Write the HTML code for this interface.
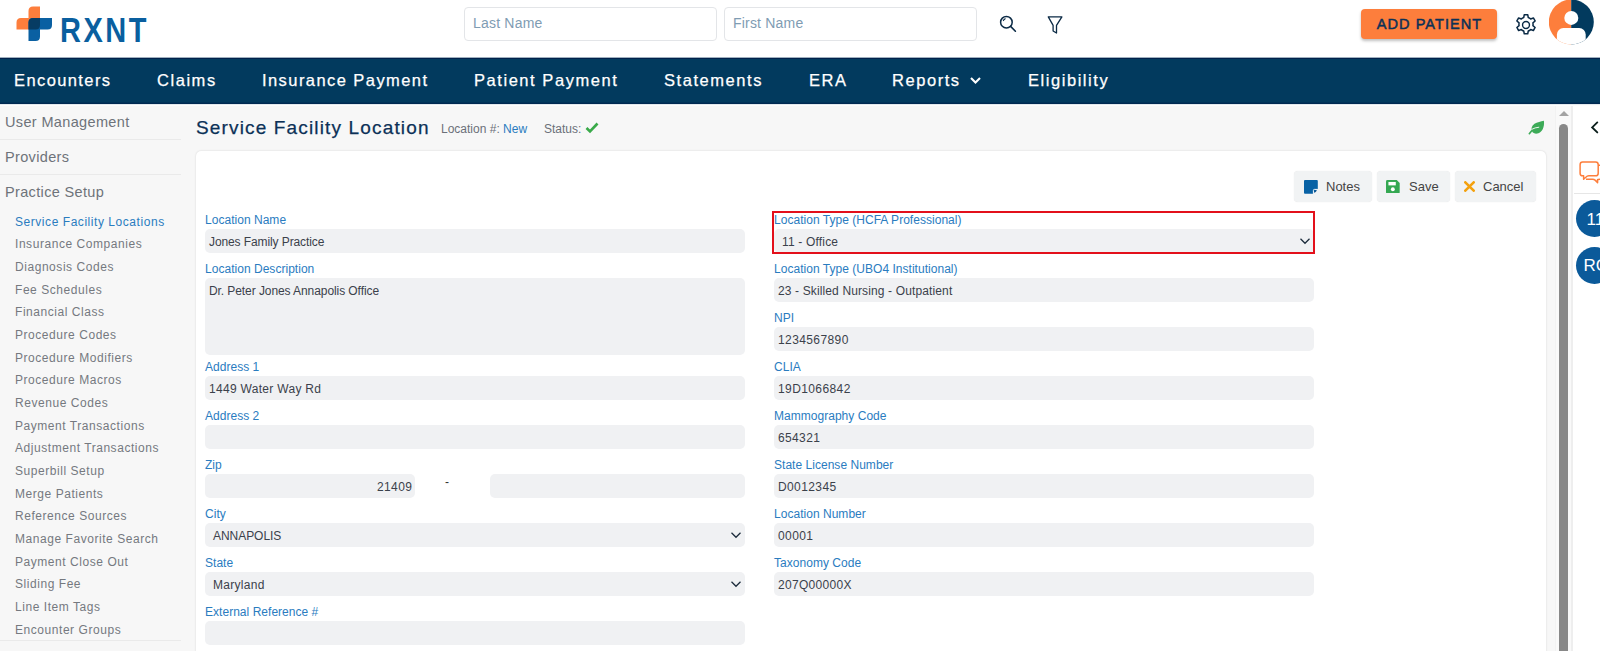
<!DOCTYPE html>
<html><head><meta charset="utf-8">
<style>
*{box-sizing:border-box;margin:0;padding:0}
html,body{width:1600px;height:651px;overflow:hidden;background:#f7f7f7;font-family:"Liberation Sans",sans-serif}
.abs{position:absolute}
#hdr{position:absolute;left:0;top:0;width:1600px;height:57px;background:#fff}
#nav{position:absolute;left:0;top:57px;width:1600px;height:47px;background:linear-gradient(#9fb1bf 0,#9fb1bf 1px,#02204b 1px,#02204b 2px,#023a5e 2px,#023a5e 45px,#012a52 46px,#012a52 47px)}
.nv{position:absolute;top:14.4px;color:#fff;-webkit-text-stroke:0.25px #fff;font-size:16.5px;letter-spacing:1.55px;white-space:nowrap;line-height:18px}
.inp{position:absolute;top:7px;height:34px;border:1px solid #e3e5e8;border-radius:4px;background:#fff;color:#7f9cb3;font-size:14px;padding-left:8px;line-height:30px;letter-spacing:0.2px}
#side{position:absolute;left:0;top:104px;width:181px;height:547px;background:#f7f7f7}
.sh{position:absolute;left:5px;font-size:14.5px;color:#6e737a;letter-spacing:0.35px;white-space:nowrap;line-height:18px}
.sep{position:absolute;left:0;width:181px;height:1px;background:#eaeaea}
.si{position:absolute;left:15px;font-size:12px;color:#75797f;letter-spacing:0.55px;white-space:nowrap;line-height:14px}
#card{position:absolute;left:196px;top:151px;width:1350px;height:520px;background:#fff;border-radius:5px;box-shadow:0 0 2px rgba(0,0,0,0.16)}
.lbl{position:absolute;font-size:12px;color:#2a7cbf;letter-spacing:0.03px;white-space:nowrap;line-height:15px}
.fld{position:absolute;height:24px;background:#f0f1f3;border-radius:5px;font-size:12px;color:#3b414b;line-height:26px;letter-spacing:-0.05px;padding-left:4px;white-space:nowrap}
.btn{position:absolute;top:171px;height:31px;background:#f1f3f4;border-radius:4px;box-shadow:0 0 1px rgba(0,0,0,0.12);font-size:13px;color:#444;line-height:32px;white-space:nowrap}
</style></head><body>
<div id="hdr">
  <svg class="abs" style="left:16px;top:6px" width="37" height="36" viewBox="0 0 37 36">
    <path d="M12.5 5 Q12.5 0.5 17 0.5 H24 V19 Q24 23.5 19.5 23.5 H0.5 V16.5 Q0.5 12 5 12 H12.5 Z" fill="#fd7e3c"/>
    <path d="M12.5 16.5 Q12.5 12 17 12 H36 V19 Q36 23.5 31.5 23.5 H24 V30.5 Q24 35 19.5 35 H12.5 Z" fill="#0a60a2"/>
    <path d="M12.5 16.5 Q12.5 12 17 12 H24 V19 Q24 23.5 19.5 23.5 H12.5 Z" fill="#073c63"/>
  </svg>
  <div class="abs" style="left:60px;top:11.5px;font-size:34.5px;font-weight:bold;color:#0a5f9f;letter-spacing:3px;line-height:36px;transform:scaleX(0.84);transform-origin:0 0">RXNT</div>
  <div class="inp" style="left:464px;width:253px">Last Name</div>
  <div class="inp" style="left:724px;width:253px">First Name</div>
  <svg class="abs" style="left:999px;top:15px" width="20" height="20" viewBox="0 0 20 20"><circle cx="7.4" cy="7.2" r="5.8" fill="none" stroke="#0b2a45" stroke-width="1.5"/><path d="M4.4 5.6 Q5 4.4 6.2 3.8" fill="none" stroke="#0b2a45" stroke-width="1.1" stroke-linecap="round"/><path d="M11.6 11.4 L16.4 16.2" stroke="#0b2a45" stroke-width="1.6" stroke-linecap="round"/></svg>
  <svg class="abs" style="left:1045px;top:14px" width="19" height="20" viewBox="0 0 19 20"><path d="M3.3 2.9 H16.9 L11.5 11.4 V19 L8.1 17 V11.4Z" fill="none" stroke="#0b2a45" stroke-width="1.3" stroke-linejoin="round"/></svg>
  <div class="abs" style="left:1361px;top:9px;width:136px;height:30px;background:#fd7e3c;border-radius:4px;box-shadow:0 2px 3px rgba(0,0,0,0.25);color:#0c3157;font-size:14.5px;letter-spacing:1.05px;text-align:center;line-height:30px;-webkit-text-stroke:0.5px #0c3157;padding-left:1px">ADD PATIENT</div>
  <svg class="abs" style="left:1513px;top:11.5px" width="26" height="26" viewBox="0 0 24 24"><path d="M12 2.5 l1.6 0 .5 2.6 a7.5 7.5 0 0 1 2.2 1.3 l2.5-.9 1.6 2.8-2 1.7 a7.5 7.5 0 0 1 0 2.6 l2 1.7-1.6 2.8-2.5-.9 a7.5 7.5 0 0 1-2.2 1.3 l-.5 2.6 h-3.2 l-.5-2.6 a7.5 7.5 0 0 1-2.2-1.3 l-2.5 .9-1.6-2.8 2-1.7 a7.5 7.5 0 0 1 0-2.6 l-2-1.7 1.6-2.8 2.5 .9 a7.5 7.5 0 0 1 2.2-1.3 l.5-2.6Z" fill="none" stroke="#0b2a45" stroke-width="1.4" stroke-linejoin="round"/><circle cx="12" cy="12" r="3.2" fill="none" stroke="#0b2a45" stroke-width="1.3"/></svg>
  <svg class="abs" style="left:1549px;top:0px" width="46" height="46" viewBox="0 0 46 46">
    <defs><clipPath id="cc"><circle cx="22.3" cy="22" r="22.5"/></clipPath></defs>
    <g clip-path="url(#cc)">
      <rect x="-1" y="-1" width="23.2" height="48" fill="#fd7e3c"/>
      <rect x="22.2" y="-1" width="24" height="48" fill="#023a5e"/>
      <circle cx="22.3" cy="17.9" r="7" fill="#fff"/>
      <rect x="7.9" y="28" width="28.8" height="20" rx="6.5" fill="#fff"/>
    </g>
  </svg>
</div>
<div id="nav">
  <div class="nv" style="left:14px;letter-spacing:1.4px">Encounters</div>
  <div class="nv" style="left:157px">Claims</div>
  <div class="nv" style="left:262px;letter-spacing:1.43px">Insurance Payment</div>
  <div class="nv" style="left:474px">Patient Payment</div>
  <div class="nv" style="left:664px">Statements</div>
  <div class="nv" style="left:809px">ERA</div>
  <div class="nv" style="left:892px">Reports</div>
  <svg class="abs" style="left:969px;top:19px" width="13" height="9" viewBox="0 0 13 9"><path d="M2 2 L6.5 6.5 L11 2" fill="none" stroke="#fff" stroke-width="2.1"/></svg>
  <div class="nv" style="left:1028px">Eligibility</div>
</div>
<div class="abs" style="left:0;top:104px;width:1600px;height:2px;background:linear-gradient(#e3e9ed 0,#e3e9ed 1px,#fdfdfd 1px,#fdfdfd 2px);z-index:5"></div>
<div id="side">
  <div class="sh" style="top:9px">User Management</div>
  <div class="sep" style="top:35px"></div>
  <div class="sh" style="top:44px">Providers</div>
  <div class="sep" style="top:70px"></div>
  <div class="sh" style="top:79px">Practice Setup</div>
  <div class="si" style="top:110.50px;color:#2a7cbf">Service Facility Locations</div>
  <div class="si" style="top:133.18px">Insurance Companies</div>
  <div class="si" style="top:155.86px">Diagnosis Codes</div>
  <div class="si" style="top:178.54px">Fee Schedules</div>
  <div class="si" style="top:201.22px">Financial Class</div>
  <div class="si" style="top:223.90px">Procedure Codes</div>
  <div class="si" style="top:246.58px">Procedure Modifiers</div>
  <div class="si" style="top:269.26px">Procedure Macros</div>
  <div class="si" style="top:291.94px">Revenue Codes</div>
  <div class="si" style="top:314.62px">Payment Transactions</div>
  <div class="si" style="top:337.30px">Adjustment Transactions</div>
  <div class="si" style="top:359.98px">Superbill Setup</div>
  <div class="si" style="top:382.66px">Merge Patients</div>
  <div class="si" style="top:405.34px">Reference Sources</div>
  <div class="si" style="top:428.02px">Manage Favorite Search</div>
  <div class="si" style="top:450.70px">Payment Close Out</div>
  <div class="si" style="top:473.38px">Sliding Fee</div>
  <div class="si" style="top:496.06px">Line Item Tags</div>
  <div class="si" style="top:518.74px">Encounter Groups</div>
  <div class="sep" style="top:536px"></div>
</div>
<!-- main -->
<div class="abs" style="left:196px;top:116.5px;font-size:19px;color:#0c3157;letter-spacing:1.15px;line-height:22px;white-space:nowrap;-webkit-text-stroke:0.25px #0c3157">Service Facility Location</div>
<div class="abs" style="left:441px;top:121.5px;font-size:12px;color:#6b7079;line-height:14px;white-space:nowrap">Location #: <span style="color:#2a7cbf">New</span></div>
<div class="abs" style="left:544px;top:121.5px;font-size:12px;color:#6b7079;line-height:14px;white-space:nowrap">Status:</div>
<svg class="abs" style="left:585px;top:122px" width="14" height="12" viewBox="0 0 14 12"><path d="M1.5 6 L5 9.5 L12.5 1.5" fill="none" stroke="#3aaa4a" stroke-width="2.6"/></svg>
<svg class="abs" style="left:1528px;top:119px" width="17" height="17" viewBox="0 0 17 17"><path d="M15.9 1.8 C16.8 8 14 13.8 9.5 14.6 C7 15 5 14 4.2 12.5 C2.8 10 3.5 7 6.5 4.8 C9 3 13 2.6 15.9 1.8Z" fill="#3dab58"/><path d="M1.3 14.7 Q3.5 11.8 5.5 10.5" fill="none" stroke="#3dab58" stroke-width="1.6" stroke-linecap="round"/><path d="M4 10.2 Q7 8.5 10.8 8.2" fill="none" stroke="#fff" stroke-width="0.9" stroke-linecap="round"/></svg>
<div id="card"></div>
<div class="lbl" style="left:205px;top:213px">Location Name</div>
<div class="fld" style="left:205px;top:229px;width:540px;height:24px;;letter-spacing:-0.1px">Jones Family Practice</div>
<div class="lbl" style="left:205px;top:262px">Location Description</div>
<div class="fld" style="left:205px;top:278px;width:540px;height:77px;line-height:14px;padding-top:6px;letter-spacing:-0.08px">Dr. Peter Jones Annapolis Office</div>
<div class="lbl" style="left:205px;top:360px">Address 1</div>
<div class="fld" style="left:205px;top:376px;width:540px;height:24px;;letter-spacing:0.3px">1449 Water Way Rd</div>
<div class="lbl" style="left:205px;top:409px">Address 2</div>
<div class="fld" style="left:205px;top:425px;width:540px;height:24px;"></div>
<div class="lbl" style="left:205px;top:458px">Zip</div>
<div class="fld" style="left:205px;top:474px;width:210px;text-align:right;padding-right:2.5px;letter-spacing:0.45px">21409</div>
<div class="abs" style="left:445px;top:475px;font-size:12px;color:#333;line-height:14px">-</div>
<div class="fld" style="left:490px;top:474px;width:255px"></div>
<div class="lbl" style="left:205px;top:507px">City</div>
<div class="fld" style="left:205px;top:523px;width:540px;padding-left:8px;letter-spacing:-0.05px">ANNAPOLIS</div>
<svg class="abs" style="left:730px;top:531px" width="12" height="8" viewBox="0 0 12 8"><path d="M1.5 1.8 L6 6.3 L10.5 1.8" fill="none" stroke="#1b2b3b" stroke-width="1.25"/></svg>
<div class="lbl" style="left:205px;top:556px">State</div>
<div class="fld" style="left:205px;top:572px;width:540px;padding-left:8px;letter-spacing:0.29px">Maryland</div>
<svg class="abs" style="left:730px;top:580px" width="12" height="8" viewBox="0 0 12 8"><path d="M1.5 1.8 L6 6.3 L10.5 1.8" fill="none" stroke="#1b2b3b" stroke-width="1.25"/></svg>
<div class="lbl" style="left:205px;top:605px">External Reference #</div>
<div class="fld" style="left:205px;top:621px;width:540px;height:24px;"></div>
<div class="lbl" style="left:774px;top:213px">Location Type (HCFA Professional)</div>
<div class="fld" style="left:774px;top:229px;width:540px;padding-left:8px;letter-spacing:0.18px">11 - Office</div>
<svg class="abs" style="left:1299px;top:237px" width="12" height="8" viewBox="0 0 12 8"><path d="M1.5 1.8 L6 6.3 L10.5 1.8" fill="none" stroke="#1b2b3b" stroke-width="1.25"/></svg>
<div class="lbl" style="left:774px;top:262px">Location Type (UBO4 Institutional)</div>
<div class="fld" style="left:774px;top:278px;width:540px;height:24px;;letter-spacing:0.13px">23 - Skilled Nursing - Outpatient</div>
<div class="lbl" style="left:774px;top:311px">NPI</div>
<div class="fld" style="left:774px;top:327px;width:540px;height:24px;;letter-spacing:0.4px">1234567890</div>
<div class="lbl" style="left:774px;top:360px">CLIA</div>
<div class="fld" style="left:774px;top:376px;width:540px;height:24px;;letter-spacing:0.4px">19D1066842</div>
<div class="lbl" style="left:774px;top:409px">Mammography Code</div>
<div class="fld" style="left:774px;top:425px;width:540px;height:24px;;letter-spacing:0.36px">654321</div>
<div class="lbl" style="left:774px;top:458px">State License Number</div>
<div class="fld" style="left:774px;top:474px;width:540px;height:24px;;letter-spacing:0.39px">D0012345</div>
<div class="lbl" style="left:774px;top:507px">Location Number</div>
<div class="fld" style="left:774px;top:523px;width:540px;height:24px;;letter-spacing:0.4px">00001</div>
<div class="lbl" style="left:774px;top:556px">Taxonomy Code</div>
<div class="fld" style="left:774px;top:572px;width:540px;height:24px;;letter-spacing:0.3px">207Q00000X</div>
<div class="abs" style="left:772px;top:211px;width:543px;height:43px;border:2px solid #e3101b"></div>
<div class="btn" style="left:1294px;width:78px"><svg class="abs" style="left:9.7px;top:8.7px" width="14" height="14" viewBox="0 0 14 14"><path d="M1 0 H12.8 Q13.8 0 13.8 1 V9 L9 13.8 H1 Q0 13.8 0 12.8 V1 Q0 0 1 0Z" fill="#0862a5"/><path d="M9.4 13.8 V10.4 Q9.4 9.4 10.4 9.4 H13.8" fill="none" stroke="#fff" stroke-width="1"/><path d="M10.5 10.5 H13 L10.5 13Z" fill="#0a4f8a"/></svg><span class="abs" style="left:32px">Notes</span></div>
<div class="btn" style="left:1377px;width:73px"><svg class="abs" style="left:9px;top:8.7px" width="13.7" height="13.7" viewBox="0 0 14 14"><path d="M0 1.5 Q0 0 1.5 0 H11 L14 3 V12.5 Q14 14 12.5 14 H1.5 Q0 14 0 12.5Z" fill="#35a852"/><rect x="2.5" y="2" width="7.5" height="3.5" fill="#fff"/><circle cx="7" cy="9.5" r="2" fill="#fff"/></svg><span class="abs" style="left:32px">Save</span></div>
<div class="btn" style="left:1455px;width:81px"><svg class="abs" style="left:9px;top:10px" width="11" height="11" viewBox="0 0 11 11"><path d="M1.3 1.3 L9.7 9.7 M9.7 1.3 L1.3 9.7" stroke="#f3a10f" stroke-width="2.6" stroke-linecap="round"/></svg><span class="abs" style="left:28px">Cancel</span></div>
<div class="abs" style="left:1555px;top:104px;width:17px;height:547px;background:#f9f9f9;border-left:1px solid #f2f2f2"></div>
<svg class="abs" style="left:1558px;top:109px" width="12" height="8" viewBox="0 0 12 8"><path d="M1 7 L6 2 L11 7Z" fill="#a3a3a3"/></svg>
<div class="abs" style="left:1558.5px;top:123.7px;width:9.6px;height:540px;background:#888;border-radius:4.8px"></div>
<div class="abs" style="left:1571px;top:104px;width:29px;height:547px;background:#fff;border-left:2px solid #eeeeee"></div>
<svg class="abs" style="left:1589px;top:119.5px" width="12" height="15" viewBox="0 0 12 15"><path d="M8.3 2.4 L3.2 7.4 L8.3 12.4" fill="none" stroke="#0c1f1c" stroke-width="1.9" stroke-linecap="round"/></svg>
<svg class="abs" style="left:1578px;top:159.7px" width="22" height="26" viewBox="0 0 22 26"><path d="M4.6 2.1 H17.6 Q20.2 2.1 20.2 4.7 V13.2 Q20.2 15.8 17.6 15.8 H10.8 Q9.2 15.8 7.8 17.2 L5.6 19.2 V15.8 H4.6 Q2.1 15.8 2.1 13.2 V4.7 Q2.1 2.1 4.6 2.1Z" fill="none" stroke="#fd7e3c" stroke-width="1.5" stroke-linejoin="round"/><path d="M20.2 5.2 H23" fill="none" stroke="#fd7e3c" stroke-width="1.5"/><path d="M8 19.2 H14.5 Q16 19.2 17.4 20.4 L19.6 22.6 V19.6 Q20 19.2 23 19.2" fill="none" stroke="#fd7e3c" stroke-width="1.5" stroke-linejoin="round"/></svg>
<div class="abs" style="left:1574px;top:193px;width:26px;height:1px;background:#e6e6e6"></div>
<div class="abs" style="left:1576px;top:199.5px;width:37px;height:37px;border-radius:50%;background:#0b5a9a;color:#fff;font-size:17px;line-height:39px;padding-left:10.5px">11</div>
<div class="abs" style="left:1576px;top:247px;width:37px;height:37px;border-radius:50%;background:#0b5a9a;color:#fff;font-size:17px;line-height:38.5px;padding-left:7.5px">RC</div>
</body></html>
